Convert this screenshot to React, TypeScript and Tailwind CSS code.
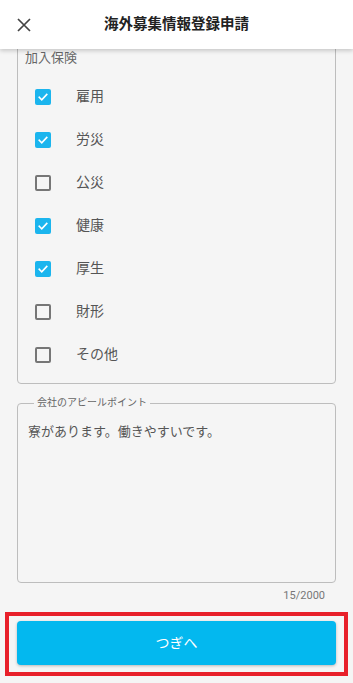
import React from "react";

const items = [
  { label: "雇用", checked: true },
  { label: "労災", checked: true },
  { label: "公災", checked: false },
  { label: "健康", checked: true },
  { label: "厚生", checked: true },
  { label: "財形", checked: false },
  { label: "その他", checked: false },
];

const CheckBox = ({ checked }: { checked: boolean }) =>
  checked ? (
    <span className="flex h-4 w-4 items-center justify-center rounded-[2px] bg-[#1bb5ee]">
      <svg width="12" height="12" viewBox="0 0 24 24" fill="none">
        <path
          d="M4.5 12.5l5 5L19.5 7"
          stroke="#fff"
          strokeWidth="3.2"
          strokeLinecap="square"
        />
      </svg>
    </span>
  ) : (
    <span className="block h-4 w-4 rounded-[2px] border-2 border-[#767676]" />
  );

export default function App() {
  return (
    <div className="flex h-[683px] w-[353px] flex-col overflow-hidden bg-[#f5f5f5] font-['Roboto','Noto_Sans_CJK_JP',sans-serif]">
      <header className="relative z-10 grid h-[49px] shrink-0 grid-cols-[48px_1fr_48px] items-center bg-white shadow-[0_2px_4px_rgba(0,0,0,0.18)]">
        <button className="flex h-full items-center pl-[17px]">
          <svg width="14" height="14" viewBox="0 0 14 14">
            <path
              d="M1 1l12 12M13 1L1 13"
              stroke="#444"
              strokeWidth="1.7"
            />
          </svg>
        </button>
        <h1 className="text-center text-[14.5px] font-bold text-[#222]">
          海外募集情報登録申請
        </h1>
        <div />
      </header>

      <main className="flex flex-col px-[17px]">
        <div className="-mt-[9px] rounded-[4px] border border-[#bdbdbd] pt-[8px] pb-[7px]">
          <p className="h-[18px] pl-[7px] text-[13px] leading-[18px] text-[#666]">
            加入保険
          </p>
          <ul className="mt-2 flex flex-col pl-[17px]">
            {items.map((it) => (
              <li key={it.label} className="flex h-[43px] items-center gap-[25px]">
                <CheckBox checked={it.checked} />
                <span className="text-[14px] text-[#555]">{it.label}</span>
              </li>
            ))}
          </ul>
        </div>

        <fieldset className="mt-[12px] h-[187px] rounded-[4px] border border-[#bdbdbd] pl-[10px] pr-[10px]">
          <legend className="ml-[6px] px-[3px] text-[10px] leading-[14px] text-[#666]">
            会社のアピールポイント
          </legend>
          <p className="pt-[12px] text-[13px] leading-[20px] text-[#555]">
            寮があります。働きやすいです。
          </p>
        </fieldset>

        <p className="mt-[5px] pr-[11px] text-right text-[11px] leading-[16px] text-[#777]">
          15/2000
        </p>
      </main>

      <div className="mx-[5px] mt-[8px] border-4 border-[#e8202a] px-[8px] pt-[5px] pb-[7px]">
        <button className="flex h-[44px] w-full items-center justify-center rounded-[4px] bg-[#03b8ef] text-[14px] text-white shadow-[0_1px_3px_rgba(0,0,0,0.25)]">
          つぎへ
        </button>
      </div>
    </div>
  );
}
